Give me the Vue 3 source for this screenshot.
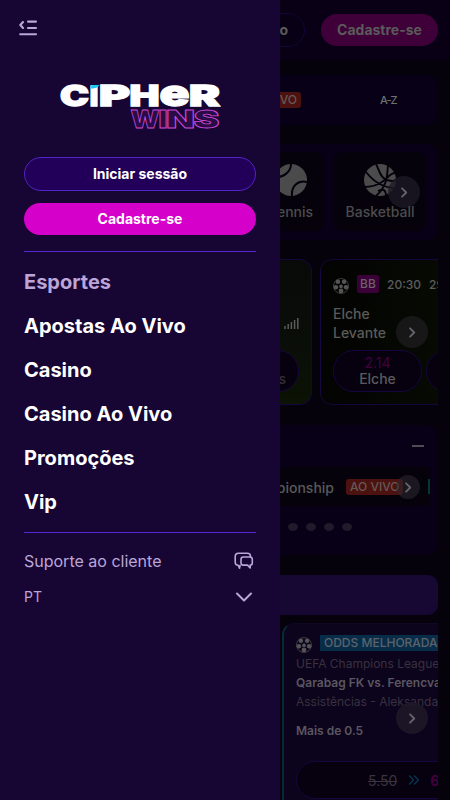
<script setup>
const menu = ['Esportes', 'Apostas Ao Vivo', 'Casino', 'Casino Ao Vivo', 'Promoções', 'Vip']
</script>

<template>
  <div class="app">
    <svg class="defs" width="0" height="0" aria-hidden="true">
      <symbol id="football" viewBox="0 0 16 16">
        <circle cx="8" cy="8" r="7.500" fill="none" stroke="#414043" stroke-width=".9" />
        <g fill="#545355">
          <circle cx="4.900" cy="3.800" r="2.300" />
          <circle cx="11.100" cy="3.800" r="2.300" />
          <circle cx="2.900" cy="9.200" r="2.300" />
          <circle cx="13.100" cy="9.200" r="2.300" />
          <circle cx="8" cy="13" r="2.400" />
          <path d="m8 6.300 2 1.400-.8 2.300H6.800L6 7.700Z" />
        </g>
      </symbol>
      <symbol id="next" viewBox="0 0 10 12">
        <path d="m3.600 3 3 3-3 3" fill="none" stroke="#65636b" stroke-width="1.300" stroke-linecap="round" stroke-linejoin="round" />
      </symbol>
    </svg>

    <div class="page">
      <header class="top">
        <span class="pill outline">Iniciar sessão</span>
        <span class="pill solid">Cadastre-se</span>
      </header>

      <nav class="panel tabs">
        <span class="live">AO VIVO</span>
        <span class="az">A-Z</span>
      </nav>

      <section class="panel sports">
        <div class="tile">
          <svg width="32" height="32" viewBox="0 0 32 32">
            <circle cx="16" cy="16" r="16" fill="#4b4b4c" />
            <path d="M16 0C16 8 8 14 0 13M17 32C16 22 23 16 32 18" fill="none" stroke="#05020c" stroke-width="2" />
          </svg>
          <span>Tennis</span>
        </div>
        <div class="tile">
          <svg width="32" height="32" viewBox="0 0 32 32">
            <circle cx="16" cy="16" r="16" fill="#4b4b4c" />
            <path d="M12 0C15 5 16 14 23 16S29 17 32 16M24 1C23 11 24 21 12 32M2 8C9 17 18 24 32 24M0 23C8 23 12 22 18 18S26 9 31 9M14 27C19 24 22 26 22 32" fill="none" stroke="#05020c" stroke-width="1.900" />
          </svg>
          <span>Basketball</span>
        </div>
        <span class="arrow"><svg width="14" height="17"><use href="#next" /></svg></span>
      </section>

      <section class="events">
        <article class="event previous">
          <svg class="bars" width="15" height="12" viewBox="0 0 15 12">
            <path d="M1 9v3M4.200 7v5M7.400 5v7M10.600 3v9M13.800 1v11" stroke="#5b5b59" stroke-width="1.500" />
          </svg>
          <span class="odd away">Draws</span>
        </article>
        <article class="event current">
          <div class="meta">
            <svg width="16" height="16"><use href="#football" /></svg>
            <b class="bb">BB</b><span>20:30</span><span>29/10</span>
          </div>
          <div class="teams">Elche<br>Levante</div>
          <div class="odds">
            <span class="odd"><i>2.14</i>Elche</span>
            <span class="odd"></span>
          </div>
        </article>
        <span class="arrow"><svg width="14" height="17"><use href="#next" /></svg></span>
      </section>

      <section class="panel leagues">
        <div class="collapse"><i></i></div>
        <div class="league">
          <span class="name">Championship</span>
          <span class="live">AO VIVO</span>
          <i class="stripe"></i>
          <span class="arrow"><svg width="14" height="17"><use href="#next" /></svg></span>
        </div>
        <div class="dots"><i v-for="n in 4" :key="n"></i></div>
      </section>

      <div class="banner"></div>

      <section class="boost-row">
        <article class="boost">
          <div class="boost-head">
            <svg width="16" height="16"><use href="#football" /></svg>
            <span>ODDS MELHORADAS</span>
          </div>
          <div class="dim competition">UEFA Champions League</div>
          <div class="match">Qarabag FK vs. Ferencvaros</div>
          <div class="dim assist">Assistências - Aleksandar</div>
          <div class="pick">Mais de 0.5</div>
          <div class="price">
            <s>5.50</s>
            <svg width="12" height="12" viewBox="0 0 12 12"><path d="m1 1.500 4.500 4.500L1 10.500M6 1.500l4.500 4.500-4.500 4.500" fill="none" stroke="#083552" stroke-width="1.400" /></svg>
            <b>6.50</b>
          </div>
        </article>
        <span class="arrow"><svg width="14" height="17"><use href="#next" /></svg></span>
      </section>
    </div>

    <aside class="drawer">
      <svg class="close" width="20" height="18" viewBox="0 0 20 18">
        <path d="M9 2.600h8M9 9h8M1.200 15.300H17M4 3 1.300 6 4 9" fill="none" stroke="#bba5d9" stroke-width="2.100" stroke-linecap="round" stroke-linejoin="round" />
      </svg>
      <svg class="logo" width="162" height="46" viewBox="0 0 162 46">
        <g class="cipher">
          <text x="1" y="22" textLength="29" lengthAdjust="spacingAndGlyphs">C</text>
          <text class="small" x="30.500" y="22" textLength="9" lengthAdjust="spacingAndGlyphs">ı</text>
          <text x="40" y="22" textLength="31" lengthAdjust="spacingAndGlyphs">P</text>
          <text x="70.500" y="22" textLength="30" lengthAdjust="spacingAndGlyphs">H</text>
          <text class="small" x="100.500" y="22" textLength="30" lengthAdjust="spacingAndGlyphs">e</text>
          <text x="130" y="22" textLength="31" lengthAdjust="spacingAndGlyphs">R</text>
        </g>
        <path d="M33 1h7.500C39 3.500 36.500 4.500 31.500 4.500 31.500 3 32 1.800 33 1Z" fill="#20c8f4" />
        <g class="wins">
          <text x="71.500" y="43.500" textLength="29" lengthAdjust="spacingAndGlyphs">W</text>
          <text x="99.500" y="43.500" textLength="9" lengthAdjust="spacingAndGlyphs">I</text>
          <text x="107" y="43.500" textLength="29" lengthAdjust="spacingAndGlyphs">N</text>
          <text x="134.500" y="43.500" textLength="26" lengthAdjust="spacingAndGlyphs">S</text>
        </g>
      </svg>
      <div class="actions">
        <button class="login">Iniciar sessão</button>
        <button class="join">Cadastre-se</button>
      </div>
      <nav class="menu">
        <a v-for="(item, i) in menu" :key="item" :class="{ active: i === 0 }">{{ item }}</a>
      </nav>
      <div class="foot">
        <div class="support">
          <span>Suporte ao cliente</span>
          <svg width="20" height="18" viewBox="0 0 20 18">
            <path d="M6 13.500 5.500 16.300 4.200 13.300C2 13.300 1.200 12.200 1.200 10V4.500C1.200 2.200 2.200 1.200 4.500 1.200h8.800c2.200 0 3.200 1 3.200 3.200" />
            <path d="M9.200 5h6.600C17.600 5 18.300 5.800 18.300 7.500v3.200c0 1.600-.7 2.400-2.100 2.400V16l-2.700-2.900H9.200C7.600 13.100 7 12.300 7 10.700V7.400C7 5.700 7.600 5 9.200 5Z" />
          </svg>
        </div>
        <div class="language">
          <span>PT</span>
          <svg width="20" height="12" viewBox="0 0 20 12"><path d="m3 2.500 7 7 7-7" /></svg>
        </div>
      </div>
    </aside>
  </div>
</template>

<style>
html, body { background: #05020c; overflow: hidden; }
</style>

<style scoped>
* { box-sizing: border-box; }
.app { font-family: Inter, sans-serif; height: 800px; overflow: hidden; position: relative; background: #05020c; }
.defs { position: absolute; }
i { font-style: normal; }
.page { color: #5b5b5b; height: 800px; overflow: hidden; }
.top { height: 60px; padding: 0 12px; background: #090016; display: flex; justify-content: flex-end; align-items: center; gap: 16px; }
.pill { height: 32px; border-radius: 17px; font-size: 14px; font-weight: 700; display: flex; align-items: center; justify-content: center; white-space: nowrap; padding-bottom: 1px; }
.outline { height: 34px; padding: 0 16px 1px; border: 1px solid #13053a; background: #080014; }
.solid { width: 117px; background: #3f0039; }
.panel { margin: 0 12px; background: #080017; border-radius: 12px; }
.tabs { margin-top: 15px; height: 50px; display: flex; align-items: center; justify-content: flex-end; padding-right: 38px; font-size: 12px; gap: 79px; }
.live { background: #4c120f; color: #655957; border-radius: 3px; height: 16px; padding: 0 4px; font-size: 12px; font-weight: 500; line-height: 16px; white-space: nowrap; }
.az { font-size: 11px; font-weight: 500; width: 20px; letter-spacing: -1px; white-space: nowrap; color: #707070; }
.sports { margin-top: 19px; height: 96px; padding: 8px 12px; display: flex; justify-content: flex-end; gap: 10px; position: relative; }
.tile { width: 92px; height: 79px; padding-top: 12px; background: #05020c; border-radius: 8px; display: flex; flex-direction: column; align-items: center; gap: 7px; font-size: 14px; line-height: 17px; font-weight: 500; color: #4c4c4c; }
.tile:first-child { width: 66px; }
.tile span { position: relative; z-index: 1; }
.arrow { position: absolute; width: 32px; height: 32px; border-radius: 50%; background: #1c1a25c8; display: flex; align-items: center; justify-content: center; }
.sports .arrow { right: 18px; top: 32px; }
.events { margin: 19px 12px 0; height: 146px; display: flex; gap: 8px; overflow: hidden; position: relative; }
.event { height: 146px; border: 1px solid #16063f; border-radius: 12px; flex-shrink: 0; }
.previous { width: 300px; background: linear-gradient(#080a08, #0a0e08 60%, #0b1304); position: relative; }
.bars { position: absolute; right: 12px; top: 57px; }
.current { width: 300px; background: linear-gradient(90deg, #030302, #070b03 130px); padding: 15px 12px; }
.meta { display: flex; align-items: center; height: 18px; font-size: 12px; font-weight: 500; color: #5c5c5c; }
.meta svg { margin-top: 4px; }
.bb { margin: 0 8px; width: 22px; height: 18px; line-height: 18px; text-align: center; background: #3b0037; color: #696069; font-weight: 500; border-radius: 2px; font-size: 12px; }
.meta span + span { margin-left: 8px; }
.teams { font-size: 14px; line-height: 19px; font-weight: 500; color: #5b5b58; margin-top: 11px; }
.odds { display: flex; gap: 4px; margin-top: 8px; }
.odd { width: 89px; height: 42px; border: 1px solid #16063f; border-radius: 21px; background: #07000f; display: flex; flex-direction: column; align-items: center; justify-content: center; font-size: 14px; line-height: 16px; font-weight: 500; flex-shrink: 0; }
.odd i { color: #43003c; font-weight: 400; }
.away { position: absolute; right: 12px; bottom: 12px; align-items: flex-end; justify-content: flex-end; padding: 0 12px 4px; color: #343039; }
.events .arrow { right: 10px; top: 57px; background: #181818f0; }
.leagues { margin-top: 20px; height: 130px; overflow: hidden; }
.collapse { height: 42px; display: flex; align-items: center; justify-content: flex-end; padding-right: 14px; }
.collapse i { width: 12px; height: 2px; background: #504c55; margin-bottom: 1px; }
.league { height: 39px; margin: 0 8px; background: #05020c; display: flex; align-items: center; justify-content: flex-end; position: relative; font-size: 14px; font-weight: 500; color: #5a5a5a; }
.name { margin: 2px 12px 0 0; }
.league .live { width: 57px; margin-right: 25px; }
.stripe { width: 2px; height: 15px; background: #07362f; }
.league .arrow { width: 24px; height: 24px; right: 10px; top: 8px; background: #2a282f90; }
.dots { display: flex; justify-content: flex-end; gap: 8px; margin: 17px 86px 0; }
.dots i { width: 10px; height: 8px; background: #211a2a; border-radius: 50%; }
.banner { margin: 19px 12px 0; height: 40px; border-radius: 0 10px 10px 0; background: #160833; }
.boost-row { margin: 8px 12px 0 282px; height: 200px; overflow: hidden; position: relative; top: 0; }
.leagues + .banner { margin-top: 20px; }
.boost { width: 300px; height: 200px; background: #0c041c; border: 1px solid #100724; border-left: 2px solid #07293a; border-radius: 12px; padding: 11px 12px; white-space: nowrap; font-size: 12px; line-height: 15px; }
.boost-head { display: flex; height: 16px; gap: 8px; align-items: center; }
.boost-head svg { margin-top: 4px; }
.boost-head span { background: #082d48; height: 16px; line-height: 16px; padding: 0 4px; font-weight: 500; color: #5c636c; }
.dim { color: #39313f; }
.competition { margin-top: 5px; }
.match { margin-top: 4px; font-weight: 600; color: #5b5660; }
.assist { margin-top: 4px; }
.pick { margin-top: 14px; font-weight: 600; color: #5b5660; }
.price { height: 38px; border: 1px solid #16063f; border-radius: 20px; margin-top: 23px; display: flex; align-items: center; padding-left: 71px; font-size: 14px; background: #07000f; color: #393440; gap: 11px; }
.price b { color: #49003f; margin-left: -1px; font-weight: 600; }
.boost-row .arrow { right: 10px; top: 79px; background: #1f1927d8; }

.drawer { position: absolute; z-index: 2; inset: 0 auto auto 0; width: 280px; height: 800px; background: #170633; padding: 19px 24px 0; }
.close { display: block; margin-left: -5px; }
.logo { display: block; margin: 47px 0 0 35px; font-family: Inter, sans-serif; font-weight: 900; }
.cipher { font-size: 28px; fill: white; stroke: white; stroke-width: 1.300px; stroke-linejoin: miter; }
.small { font-size: 36px; }
.wins { font-size: 25px; fill: #290b46; stroke: #cb48d8; stroke-width: .8px; }
.actions { margin-top: 27px; display: flex; flex-direction: column; gap: 12px; }
button { display: block; font: 700 14px/17px Inter, sans-serif; color: white; border: 0; width: 100%; border-radius: 17px; padding: 0 0 1px; }
.login { height: 34px; border: 1px solid #4f25c5; background: #220059; }
.join { height: 32px; background: #d600cb; }
.menu { height: 282px; margin-top: 16px; border-top: 1px solid #5527d2; border-bottom: 1px solid #5527d2; padding-top: 8px; }
.menu a { display: flex; height: 44px; align-items: center; color: white; font-weight: 700; font-size: 20px; }
.menu .active { color: #bba5d9; }
.foot { color: #bba5d9; font-size: 16px; }
.foot svg { fill: none; stroke: #bba5d9; stroke-width: 1.600; stroke-linecap: round; stroke-linejoin: round; }
.support { margin-top: 18px; height: 20px; display: flex; justify-content: space-between; align-items: center; padding-right: 2px; }
.language { height: 20px; margin-top: 16px; font-size: 14px; display: flex; justify-content: space-between; align-items: center; padding-right: 2px; }
.language span { padding-bottom: 1px; }
.foot .language svg { stroke-width: 2; }
</style>
